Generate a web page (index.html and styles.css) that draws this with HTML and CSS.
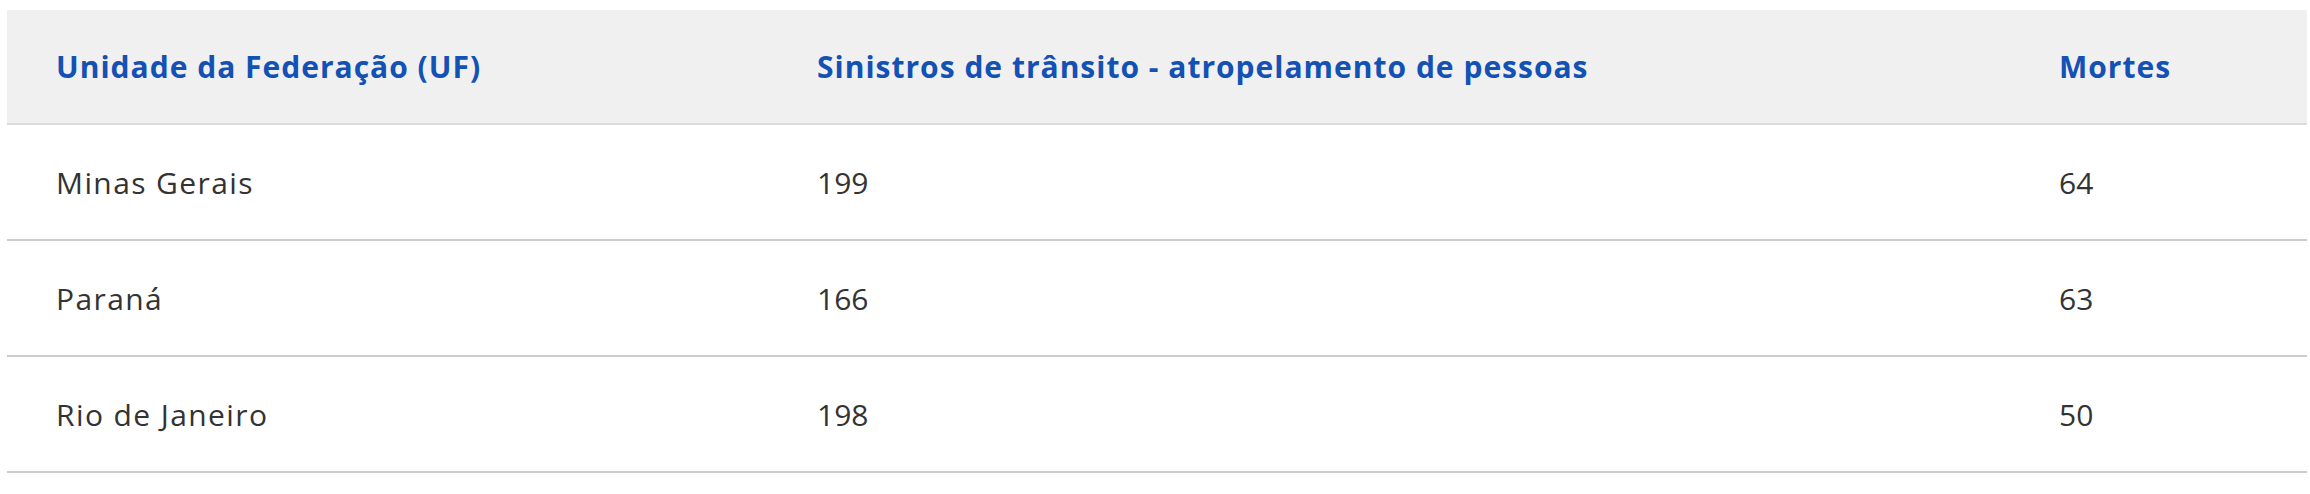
FILE: index.html
```html
<!DOCTYPE html>
<html lang="pt-BR">
<head>
<meta charset="utf-8">
<title>Sinistros de trânsito</title>
<link rel="stylesheet" href="styles.css">
</head>
<body>
<div class="wrap">
  <table class="data">
    <colgroup>
      <col class="c1"><col class="c2"><col class="c3">
    </colgroup>
    <thead>
      <tr>
        <th>Unidade da Federação (UF)</th>
        <th>Sinistros de trânsito - atropelamento de pessoas</th>
        <th>Mortes</th>
      </tr>
    </thead>
    <tbody>
      <tr><td>Minas Gerais</td><td class="num">199</td><td class="num">64</td></tr>
      <tr><td>Paraná</td><td class="num">166</td><td class="num">63</td></tr>
      <tr><td>Rio de Janeiro</td><td class="num">198</td><td class="num">50</td></tr>
    </tbody>
  </table>
</div>
</body>
</html>
```
FILE: styles.css
```css
html, body {
  margin: 0;
  padding: 0;
  background: #ffffff;
}
.wrap {
  padding: 10px 3px 0 7px;
}
.data {
  width: 2300px;
  border-collapse: collapse;
  table-layout: fixed;
  font-family: "Open Sans", Lato, sans-serif;
  font-size: 30px;
}
.c1 { width: 761px; }
.c2 { width: 1242px; }
.c3 { width: 297px; }
.data th {
  background: #f0f0f0;
  color: #1351b4;
  font-weight: 700;
  letter-spacing: 1px;
  text-align: left;
  height: 113px;
  padding: 0 0 0 49px;
  border-bottom: 2px solid #dcdcdc;
  vertical-align: middle;
}
.data td {
  color: #333333;
  font-weight: 400;
  letter-spacing: 1.4px;
  height: 114px;
  padding: 0 0 0 49px;
  border-bottom: 2px solid #cccccc;
  vertical-align: middle;
}
.data td.num {
  letter-spacing: 0;
}
```
